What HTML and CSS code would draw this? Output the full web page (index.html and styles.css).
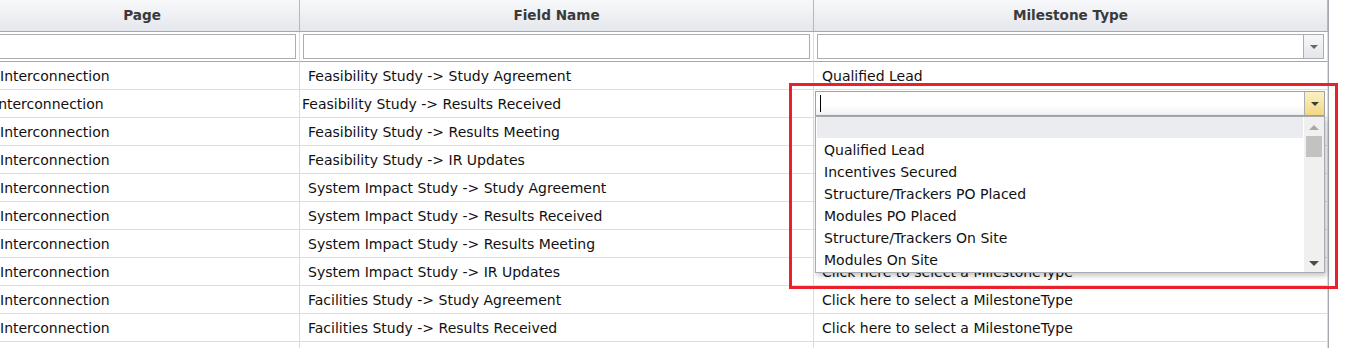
FILE: index.html
```html
<!DOCTYPE html>
<html lang="en">
    <head>
        <meta charset="UTF-8" />
        <meta name="viewport" content="width=device-width, initial-scale=1.0" />
        <title>Milestone Mapping</title>
        <link rel="stylesheet" href="styles.css">
    </head>
    <body>
        <div class="grid">
            <div class="grid-inner">
                <div class="row hdr">
                    <div class="cell page-hdr">Page</div>
                    <div class="cell">Field Name</div>
                    <div class="cell">Milestone Type</div>
                </div>
                <div class="row filter">
                    <div class="cell"><div class="fbox"></div></div>
                    <div class="cell"><div class="fbox"></div></div>
                    <div class="cell">
                        <div class="fbox combo">
                            <span class="btn"><i class="arrow"></i></span>
                        </div>
                    </div>
                </div>

                <div class="row data">
                    <div class="cell">Interconnection</div>
                    <div class="cell">Feasibility Study -&gt; Study Agreement</div>
                    <div class="cell">Qualified Lead</div>
                </div>
                <div class="row data editing">
                    <div class="cell">Interconnection</div>
                    <div class="cell">Feasibility Study -&gt; Results Received</div>
                    <div class="cell">
                        <div class="editor">
                            <span class="caret"></span>
                            <span class="btn hot"><i class="arrow"></i></span>
                        </div>
                    </div>
                </div>
                <!-- milestone cells of these rows sit under the open drop down -->
                <div class="row data">
                    <div class="cell">Interconnection</div>
                    <div class="cell">Feasibility Study -&gt; Results Meeting</div>
                    <div class="cell"></div>
                </div>
                <div class="row data">
                    <div class="cell">Interconnection</div>
                    <div class="cell">Feasibility Study -&gt; IR Updates</div>
                    <div class="cell"></div>
                </div>
                <div class="row data">
                    <div class="cell">Interconnection</div>
                    <div class="cell">System Impact Study -&gt; Study Agreement</div>
                    <div class="cell"></div>
                </div>
                <div class="row data">
                    <div class="cell">Interconnection</div>
                    <div class="cell">System Impact Study -&gt; Results Received</div>
                    <div class="cell"></div>
                </div>
                <div class="row data">
                    <div class="cell">Interconnection</div>
                    <div class="cell">System Impact Study -&gt; Results Meeting</div>
                    <div class="cell"></div>
                </div>
                <div class="row data">
                    <div class="cell">Interconnection</div>
                    <div class="cell">System Impact Study -&gt; IR Updates</div>
                    <div class="cell">Click here to select a MilestoneType</div>
                </div>
                <div class="row data">
                    <div class="cell">Interconnection</div>
                    <div class="cell">Facilities Study -&gt; Study Agreement</div>
                    <div class="cell">Click here to select a MilestoneType</div>
                </div>
                <div class="row data">
                    <div class="cell">Interconnection</div>
                    <div class="cell">Facilities Study -&gt; Results Received</div>
                    <div class="cell">Click here to select a MilestoneType</div>
                </div>
                <div class="row data">
                    <div class="cell"></div>
                    <div class="cell"></div>
                    <div class="cell"></div>
                </div>
            </div>
        </div>

        <!-- open drop down of the editing cell -->
        <div class="popup">
            <ul class="list">
                <li class="item sel"></li>
                <li class="item">Qualified Lead</li>
                <li class="item">Incentives Secured</li>
                <li class="item">Structure/Trackers PO Placed</li>
                <li class="item">Modules PO Placed</li>
                <li class="item">Structure/Trackers On Site</li>
                <li class="item">Modules On Site</li>
            </ul>
            <div class="vscroll">
                <i class="sarrow up"></i>
                <div class="thumb"></div>
                <i class="sarrow down"></i>
            </div>
        </div>

        <!-- red highlight from the screenshot -->
        <div class="callout"></div>
    </body>
</html>
```

FILE: styles.css
```css
body {
    margin: 0;
    padding: 0;
    background: #fff;
    font-family: 'DejaVu Sans', Verdana, sans-serif;
    font-size: 14px;
    color: #111;
    overflow: hidden;
}

.grid {
    width: 1328px;
    height: 348px;
    overflow: hidden;
    border-right: 1px solid #a4a9b0;
}

.grid-inner {
    margin-left: -8px;
}

.row {
    display: grid;
    grid-template-columns: 308px 514px 514px;
}

.cell {
    box-sizing: border-box;
    border-right: 1px solid #dcdcdc;
    white-space: nowrap;
    overflow: hidden;
}

.hdr .cell {
    height: 32px;
    line-height: 31px;
    text-align: center;
    font-weight: bold;
    font-size: 13.6px;
    color: #3a3a3a;
    background: linear-gradient(#f7f8fa, #e4e7eb);
    border-right-color: #b4b9c0;
    border-bottom: 1px solid #a3a8af;
}

.hdr .page-hdr {
    padding-right: 7px;
}

.filter .cell {
    height: 30px;
    padding: 2px 3px 0 3px;
    border-right-color: #dcdcdc;
    border-bottom: 1px solid #a3a8af;
}

.fbox {
    box-sizing: border-box;
    height: 25px;
    border: 1px solid #abadb3;
    background: #fff;
    display: flex;
    justify-content: flex-end;
}

.btn {
    box-sizing: border-box;
    width: 20px;
    height: 100%;
    border-left: 1px solid #abadb3;
    background: linear-gradient(#f6f7f9, #e4e6ea);
    display: flex;
    align-items: center;
    justify-content: center;
}

.btn.hot {
    background: linear-gradient(#fcf1c4, #f2d882);
}

.arrow {
    width: 0;
    height: 0;
    border-left: 4px solid transparent;
    border-right: 4px solid transparent;
    border-top: 4px solid #666;
}

.btn.hot .arrow {
    border-top-color: #3c3c3c;
}

.data .cell {
    height: 28px;
    line-height: 28px;
    padding: 0 8px;
    border-bottom: 1px solid #dedede;
}

.editing .cell {
    padding-left: 2px;
}

.editing .cell:last-child {
    padding: 1px 2px 0 1px;
}

.editor {
    box-sizing: border-box;
    height: 25px;
    border: 1px solid #9fa3a9;
    background: linear-gradient(#fff 60%, #f1f1f1);
    display: flex;
    align-items: center;
    justify-content: space-between;
}

.caret {
    width: 1px;
    height: 17px;
    margin-left: 4px;
    background: #000;
}

.popup {
    position: absolute;
    left: 815px;
    top: 116px;
    width: 510px;
    height: 157px;
    box-sizing: border-box;
    border: 1px solid #a7abb1;
    background: #fff;
    box-shadow: 2px 3px 5px rgba(0, 0, 0, 0.22);
    display: flex;
}

.list {
    flex: 1;
    list-style: none;
    margin: 0;
    padding: 0 1px;
}

.item {
    height: 22px;
    line-height: 23px;
    padding-left: 7px;
    white-space: nowrap;
}

.item.sel {
    height: 21px;
    margin-bottom: 1px;
    background: #ebecef;
}

.vscroll {
    width: 20px;
    background: #f0f0f0;
    display: flex;
    flex-direction: column;
    align-items: center;
}

.sarrow {
    width: 0;
    height: 0;
    border-left: 5px solid transparent;
    border-right: 5px solid transparent;
}

.sarrow.up {
    margin-top: 8px;
    border-bottom: 5px solid #a8a8a8;
}

.sarrow.down {
    margin-top: auto;
    margin-bottom: 6px;
    border-top: 5px solid #4c4c4c;
}

.thumb {
    width: 16px;
    height: 21px;
    margin-top: 6px;
    background: #c2c2c2;
}

.callout {
    position: absolute;
    left: 789px;
    top: 83px;
    width: 543px;
    height: 200px;
    border: 3px solid #e9212c;
}
```
